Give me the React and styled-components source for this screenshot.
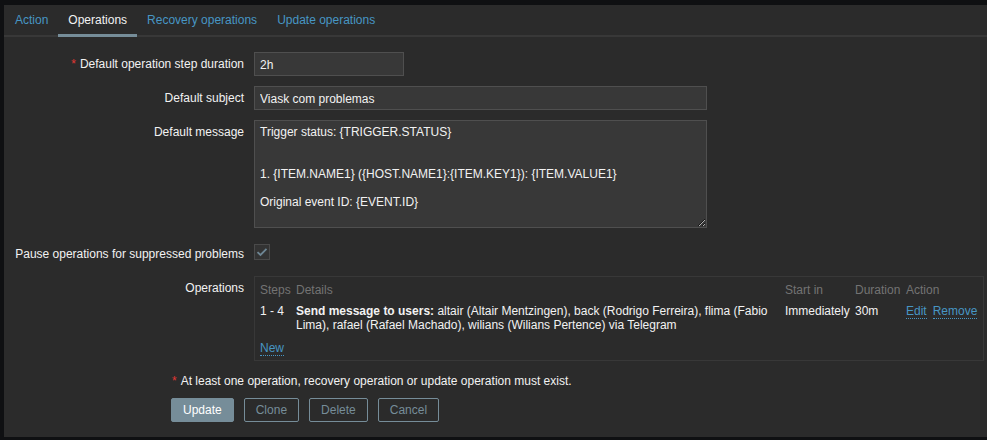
import React from "react";
import styled, { createGlobalStyle } from "styled-components";

const Global = createGlobalStyle`
  html, body { margin: 0; padding: 0; background: #0f1012; }
  body { font-family: "Liberation Sans", Arial, sans-serif; font-size: 12px; color: #f2f2f2; }
  * { box-sizing: border-box; }
`;

const Page = styled.div`
  padding: 5px 0 3px 4px;
  height: 440px;
`;

const Panel = styled.div`
  background: #2b2b2b;
  height: 432px;
  display: flex;
  flex-direction: column;
`;

const TabBar = styled.div`
  display: flex;
  height: 32px;
  border-bottom: 2px solid #383838;
  padding-left: 1px;
`;

const Tab = styled.div`
  position: relative;
  height: 30px;
  line-height: 29px;
  padding: 1px 10px 0;
  color: ${(p) => (p.$active ? "#f2f2f2" : "#4796c4")};
  &::after {
    content: "";
    display: ${(p) => (p.$active ? "block" : "none")};
    position: absolute;
    left: 0;
    right: 0;
    bottom: -2px;
    height: 3px;
    background: #768d99;
  }
`;

const Form = styled.div`
  display: grid;
  grid-template-columns: 240px 1fr;
  column-gap: 10px;
  row-gap: 10px;
  padding: 15px 0 0 0;
`;

const Label = styled.div`
  text-align: right;
  line-height: 14px;
  padding-top: ${(p) => p.$top ?? 5}px;
  white-space: nowrap;
`;

const Req = styled.span`
  color: #e33734;
  margin-right: 4px;
`;

const Input = styled.input`
  display: block;
  height: 24px;
  width: ${(p) => p.$w}px;
  background: #383838;
  border: 1px solid #4f4f4f;
  color: #f2f2f2;
  font: inherit;
  padding: 1px 5px 0;
  outline: none;
`;

const TextArea = styled.textarea`
  display: block;
  width: 453px;
  height: 108px;
  background: #383838;
  border: 1px solid #4f4f4f;
  color: #f2f2f2;
  font: inherit;
  line-height: 14px;
  padding: 4px 5px 2px;
  outline: none;
  resize: both;
`;

const CheckRow = styled.div`
  height: 28px;
  padding-top: 6px;
`;

const CheckBox = styled.div`
  width: 16px;
  height: 16px;
  border: 1px solid #4a4a4a;
  background: #333333;
  display: flex;
  align-items: center;
  justify-content: center;
`;

const OpsBox = styled.div`
  width: 730px;
  border: 1px solid #383838;
  padding-bottom: 3px;
  display: grid;
  grid-template-columns: 36px 489px 70px 51px 1fr;
  line-height: 14px;
`;

const Cell = styled.div`
  padding: ${(p) => (p.$pad ? p.$pad : "5px 5px 3px")};
  color: ${(p) => (p.$head ? "#737373" : "#f2f2f2")};
  white-space: ${(p) => (p.$wrap ? "normal" : "nowrap")};
  grid-column: ${(p) => p.$span || "auto"};
`;

const Link = styled.span`
  color: #4796c4;
  border-bottom: 1px dotted #4796c4;
  cursor: pointer;
`;

const Actions = styled.div`
  display: flex;
  gap: 6px;
`;

const Footer = styled.div`
  padding: 10px 0 15px 167px;
`;

const Warning = styled.div`
  line-height: 14px;
  padding-top: 3px;
  padding-left: 1px;
`;

const Buttons = styled.div`
  display: flex;
  gap: 10px;
  margin-top: 10px;
`;

const Button = styled.button`
  height: 24px;
  padding: 0 11px;
  font: inherit;
  border: 1px solid #768d99;
  border-radius: 2px;
  background: ${(p) => (p.$primary ? "#768d99" : "transparent")};
  color: ${(p) => (p.$primary ? "#ffffff" : "#768d99")};
  cursor: pointer;
`;

export default function App() {
  const message =
    "Trigger status: {TRIGGER.STATUS}\n\n\n1. {ITEM.NAME1} ({HOST.NAME1}:{ITEM.KEY1}): {ITEM.VALUE1}\n\nOriginal event ID: {EVENT.ID}";
  return (
    <>
      <Global />
      <Page>
        <Panel>
          <TabBar>
            <Tab>Action</Tab>
            <Tab $active>Operations</Tab>
            <Tab>Recovery operations</Tab>
            <Tab>Update operations</Tab>
          </TabBar>
          <Form>
            <Label>
              <Req>*</Req>Default operation step duration
            </Label>
            <Input $w={150} defaultValue="2h" />

            <Label>Default subject</Label>
            <Input $w={453} defaultValue="Viask com problemas" />

            <Label>Default message</Label>
            <TextArea defaultValue={message} />

            <Label $top={9}>Pause operations for suppressed problems</Label>
            <CheckRow>
              <CheckBox>
                <svg width="12" height="10" viewBox="0 0 12 10">
                  <path d="M1.5 5.2 L4.5 8 L10.5 1.8" fill="none" stroke="#6e8694" strokeWidth="1.8" />
                </svg>
              </CheckBox>
            </CheckRow>

            <Label>Operations</Label>
            <OpsBox>
              <Cell $head $pad="6px 5px 2px">Steps</Cell>
              <Cell $head $pad="6px 5px 2px">Details</Cell>
              <Cell $head $pad="6px 5px 2px">Start in</Cell>
              <Cell $head $pad="6px 5px 2px">Duration</Cell>
              <Cell $head $pad="6px 5px 2px">Action</Cell>

              <Cell>1 - 4</Cell>
              <Cell $wrap>
                <b>Send message to users:</b> altair (Altair Mentzingen), back (Rodrigo Ferreira), flima (Fabio
                Lima), rafael (Rafael Machado), wilians (Wilians Pertence) via Telegram
              </Cell>
              <Cell>Immediately</Cell>
              <Cell>30m</Cell>
              <Cell>
                <Actions>
                  <Link>Edit</Link>
                  <Link>Remove</Link>
                </Actions>
              </Cell>

              <Cell $span="1 / -1" $pad="6px 5px 2px">
                <Link>New</Link>
              </Cell>
            </OpsBox>
          </Form>
          <Footer>
            <Warning>
              <Req>*</Req>At least one operation, recovery operation or update operation must exist.
            </Warning>
            <Buttons>
              <Button $primary>Update</Button>
              <Button>Clone</Button>
              <Button>Delete</Button>
              <Button>Cancel</Button>
            </Buttons>
          </Footer>
        </Panel>
      </Page>
    </>
  );
}
